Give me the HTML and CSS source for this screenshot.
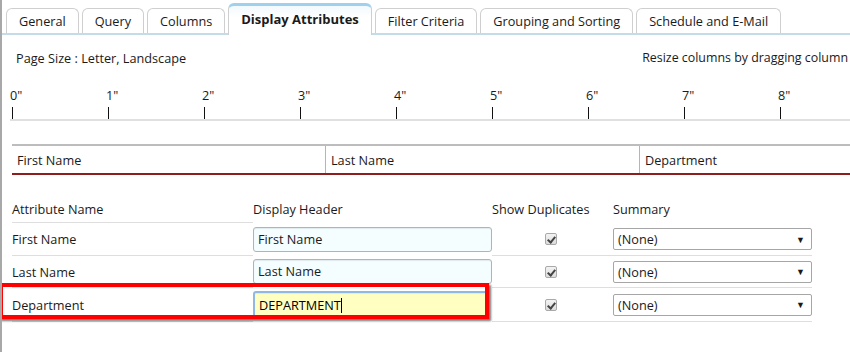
FILE: index.html
```html
<!DOCTYPE html>
<html lang="en">

<head>
    <meta charset="utf8">
    <title>Report Designer - Display Attributes</title>
    <link rel="stylesheet" href="styles.css">
</head>

<body>
    <div class="frame">
        <ul class="tabs">
            <li class="tab">General</li>
            <li class="tab">Query</li>
            <li class="tab">Columns</li>
            <li class="tab active">Display Attributes</li>
            <li class="tab">Filter Criteria</li>
            <li class="tab">Grouping and Sorting</li>
            <li class="tab">Schedule and E-Mail</li>
        </ul>

        <div class="page">
            <div class="page-info">
                <span>Page Size : Letter, Landscape</span>
                <span>Resize columns by dragging column</span>
            </div>

            <div class="ruler">
                <div class="inch"><span>0"</span><i></i></div>
                <div class="inch"><span>1"</span><i></i></div>
                <div class="inch"><span>2"</span><i></i></div>
                <div class="inch"><span>3"</span><i></i></div>
                <div class="inch"><span>4"</span><i></i></div>
                <div class="inch"><span>5"</span><i></i></div>
                <div class="inch"><span>6"</span><i></i></div>
                <div class="inch"><span>7"</span><i></i></div>
                <div class="inch"><span>8"</span><i></i></div>
            </div>

            <div class="preview">
                <div class="preview-col">First Name</div>
                <div class="preview-col">Last Name</div>
                <div class="preview-col">Department</div>
            </div>

            <div class="attributes">
                <div class="attr-row head">
                    <div class="cell name">Attribute Name</div>
                    <div class="cell header">Display Header</div>
                    <div class="cell dup">Show Duplicates</div>
                    <div class="cell summary">Summary</div>
                </div>
                <div class="attr-row">
                    <div class="cell name">First Name</div>
                    <div class="cell header"><div class="text-input">First Name</div></div>
                    <div class="cell dup"><span class="check"></span></div>
                    <div class="cell summary"><div class="dropdown">(None)<span>&#9660;</span></div></div>
                </div>
                <div class="attr-row">
                    <div class="cell name">Last Name</div>
                    <div class="cell header"><div class="text-input">Last Name</div></div>
                    <div class="cell dup"><span class="check"></span></div>
                    <div class="cell summary"><div class="dropdown">(None)<span>&#9660;</span></div></div>
                </div>
                <div class="attr-row selected">
                    <div class="cell name">Department</div>
                    <div class="cell header"><div class="text-input focused">DEPARTMENT<b class="caret"></b></div></div>
                    <div class="cell dup"><span class="check"></span></div>
                    <div class="cell summary"><div class="dropdown">(None)<span>&#9660;</span></div></div>
                </div>
                <!-- callout around the edited row -->
                <div class="highlight"></div>
            </div>
        </div>
    </div>
</body>

</html>
```

FILE: styles.css
```css
* {
    box-sizing: border-box;
    margin: 0;
    padding: 0;
}

body {
    background-color: #fff;
    font-family: "Open Sans", "Noto Sans", sans-serif;
    font-size: 12.7px;
    color: #1a1a1a;
}

.frame {
    border-left: 2px solid #a8a8a8;
    min-height: 352px;
    overflow: hidden;
}

/* tab strip */
ul.tabs {
    list-style: none;
    display: flex;
    align-items: flex-end;
    gap: 3px;
    height: 35px;
    padding-left: 4px;
    border-bottom: 2px solid #c4dbea;
}

.tab {
    height: 25px;
    line-height: 24px;
    padding: 0 12px;
    border: 1px solid #cfcfcf;
    border-bottom: none;
    border-radius: 6px 6px 0 0;
    background-color: #fff;
    white-space: nowrap;
}

.tab.active {
    height: 32px;
    line-height: 26px;
    margin-bottom: -2px;
    font-weight: bold;
    font-size: 13px;
    padding: 0 12px;
    border-top: 3px solid #9fd0ee;
    background: linear-gradient(#f2f9fd, #fff 40%);
}

/* page area */
.page {
    padding: 0 0 0 8px;
}

.page-info {
    display: flex;
    justify-content: space-between;
    padding: 14px 2px 0 6px;
    height: 40px;
    white-space: nowrap;
}

.page-info span:last-child {
    font-size: 12.4px;
}

.ruler {
    display: flex;
    border-bottom: 2px solid #e0e0e0;
    height: 35px;
    margin-top: 11px;
}

.ruler .inch {
    width: 96px;
    flex: none;
    display: flex;
    flex-direction: column;
}

.ruler .inch span {
    height: 22px;
}

.ruler .inch i {
    display: block;
    width: 1px;
    height: 12px;
    margin-left: 2px;
    background-color: #111;
}

.preview {
    display: flex;
    margin: 23px 0 0 2px;
    height: 31px;
    border-top: 2px solid #bdbdbd;
    border-bottom: 2px solid #8e1d1d;
}

.preview-col {
    width: 314px;
    flex: none;
    padding: 5px 0 0 5px;
    border-right: 1px solid #b5b5b5;
}

.preview-col:last-child {
    border-right: none;
    flex: 1;
}

/* attribute grid */
.attributes {
    position: relative;
    margin: 25px 0 0 2px;
    width: 800px;
}

.attr-row {
    display: grid;
    grid-template-columns: 241px 239px 121px 199px;
    height: 32px;
    align-items: center;
}

.attr-row.head {
    height: 23px;
    align-items: start;
}

.attr-row.head + .attr-row {
    height: 33px;
}

.attr-row.selected {
    height: 34px;
}

.cell {
    height: 100%;
    display: flex;
    align-items: center;
    border-bottom: 1px solid #dedede;
}

.attr-row.head .cell {
    align-items: flex-start;
}

.attr-row.head .cell.dup,
.attr-row.head .cell.summary,
.cell.header {
    border-bottom-color: transparent;
}

.cell.dup {
    justify-content: center;
    padding-right: 4px;
}

.attr-row.head .cell.dup {
    justify-content: flex-start;
}

.text-input {
    width: 239px;
    height: 25px;
    border: 1px solid #b3b3b3;
    border-radius: 3px;
    background-color: #f4fdff;
    padding: 2px 0 0 4px;
    box-shadow: inset 0 1px 1px rgba(0, 0, 0, .08);
}

.text-input.focused {
    width: 236px;
    height: 28px;
    background-color: #ffffc2;
    border: 2px solid #8fb9e3;
    padding-top: 3px;
    color: #000;
}

.caret {
    display: inline-block;
    width: 1px;
    height: 15px;
    background-color: #000;
    vertical-align: -3px;
}

.check {
    display: block;
    width: 12px;
    height: 12px;
    border: 1px solid #a9a9a9;
    border-radius: 2px;
    background: linear-gradient(#f3f3f3, #dcdcdc);
    position: relative;
}

.check:after {
    content: "";
    position: absolute;
    left: 3px;
    top: 1px;
    width: 3px;
    height: 6px;
    border: solid #444;
    border-width: 0 2px 2px 0;
    transform: rotate(40deg);
}

.dropdown {
    width: 199px;
    height: 22px;
    border: 1px solid #a6a6a6;
    border-radius: 2px;
    display: flex;
    align-items: center;
    justify-content: space-between;
    padding: 0 6px 0 4px;
    background-color: #fff;
}

.dropdown span {
    font-size: 9px;
}

.highlight {
    position: absolute;
    left: -13px;
    top: 83px;
    width: 490px;
    height: 36px;
    border: 4px solid #f00;
    box-shadow: 2px 2px 2px rgba(0, 0, 0, .55);
    pointer-events: none;
}
```
